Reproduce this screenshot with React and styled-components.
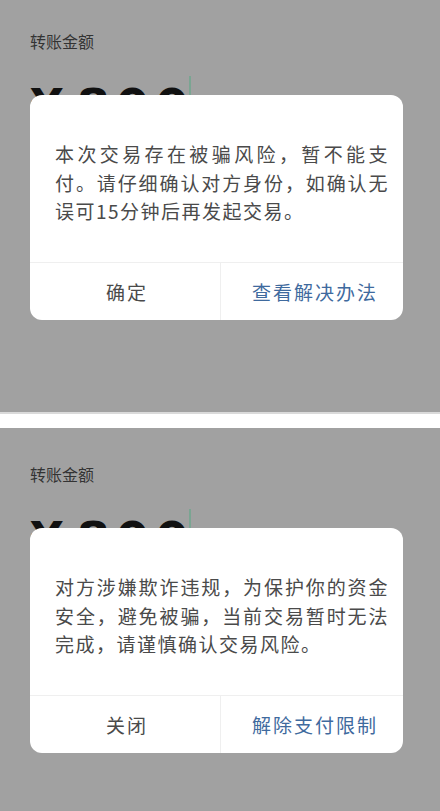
import styled, { createGlobalStyle } from 'styled-components'

const GlobalStyle = createGlobalStyle`
  html, body {
    margin: 0;
    padding: 0;
    background: #ffffff;
  }

  body {
    font-family: "Noto Sans CJK SC", "Noto Sans", sans-serif;
  }
`

const Page = styled.div`
  display: flex;
  flex-direction: column;
  gap: 14px;
  width: 440px;
`

const Screen = styled.section`
  position: relative;
  box-sizing: border-box;
  height: ${({ height }) => height}px;
  padding: ${({ offset }) => offset}px 0 0 30px;
  background: #a1a1a1;
  border-bottom: ${({ edge }) => (edge ? '2px solid #dadada' : 'none')};
  overflow: hidden;
`

const FieldLabel = styled.div`
  font-size: 16px;
  line-height: 20px;
  color: #333333;
`

const AmountRow = styled.div`
  display: flex;
  align-items: flex-start;
  margin-top: 25px;
`

const Amount = styled.div`
  font-family: "DejaVu Sans", sans-serif;
  font-weight: 700;
  font-size: 48px;
  line-height: 48px;
  letter-spacing: 6px;
  margin-top: 6px;
  color: #111111;
`

const Currency = styled.span`
  margin-right: 7px;
`

const Caret = styled.span`
  width: 2px;
  height: 46px;
  margin-left: -6px;
  background: #7aa592;
`

const Dialog = styled.div`
  position: absolute;
  left: 30px;
  top: ${({ top }) => top}px;
  width: 373px;
  border-radius: 12px;
  background: #ffffff;
  overflow: hidden;
`

const Message = styled.p`
  margin: 0;
  padding: 45px 14px 36px 25px;
  font-size: 19px;
  line-height: 28.5px;
  letter-spacing: 1.5px;
  text-align: justify;
  color: #4a4a4a;
`

const Actions = styled.div`
  display: grid;
  grid-template-columns: 190px 1fr;
  height: 57px;
  border-top: 1px solid #efefef;
`

const Action = styled.button`
  display: flex;
  align-items: center;
  justify-content: center;
  padding: 0 0 0 ${({ primary }) => (primary ? '6px' : '4px')};
  border: none;
  border-left: ${({ primary }) => (primary ? '1px solid #efefef' : 'none')};
  background: transparent;
  font-family: inherit;
  font-size: 19px;
  letter-spacing: 2px;
  color: ${({ primary }) => (primary ? '#3f6a9e' : '#4a4a4a')};
  cursor: pointer;
`

function TransferScreen({ height, offset, edge, message, cancel, action }) {
  return (
    <Screen height={height} offset={offset} edge={edge}>
      <FieldLabel>转账金额</FieldLabel>
      <AmountRow>
        <Amount>
          <Currency>¥</Currency>800
        </Amount>
        <Caret />
      </AmountRow>
      <Dialog top={offset + 64}>
        <Message>{message}</Message>
        <Actions>
          <Action>{cancel}</Action>
          <Action primary>{action}</Action>
        </Actions>
      </Dialog>
    </Screen>
  )
}

export default function App() {
  return (
    <>
      <GlobalStyle />
      <Page>
        <TransferScreen
          height={414}
          offset={31}
          edge
          message="本次交易存在被骗风险，暂不能支付。请仔细确认对方身份，如确认无误可15分钟后再发起交易。"
          cancel="确定"
          action="查看解决办法"
        />
        <TransferScreen
          height={383}
          offset={36}
          message="对方涉嫌欺诈违规，为保护你的资金安全，避免被骗，当前交易暂时无法完成，请谨慎确认交易风险。"
          cancel="关闭"
          action="解除支付限制"
        />
      </Page>
    </>
  )
}
